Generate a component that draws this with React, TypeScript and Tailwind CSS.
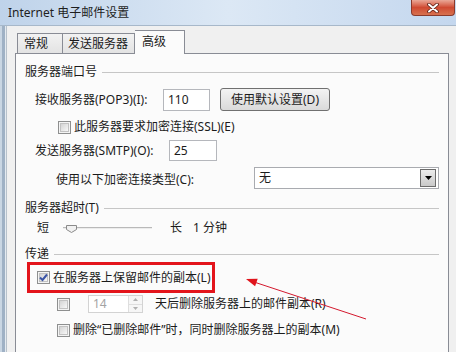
import React from "react";

function Checkbox({ checked }: { checked?: boolean }) {
  return (
    <span className="relative flex h-[13px] w-[13px] shrink-0 items-center justify-center border border-[#8e8f8f] bg-[#f4f4f4]">
      <span className="h-[9px] w-[9px] border border-[#c2c2c2] bg-gradient-to-br from-[#d4d4d4] to-[#f8f8f8]" />
      {checked && (
        <svg className="absolute left-0 top-0" width="11" height="11" viewBox="0 0 11 11">
          <path d="M2 5.5 L4.5 8 L9 2.5" fill="none" stroke="#3b55a6" strokeWidth="2" />
        </svg>
      )}
    </span>
  );
}

function GroupHeader({ label, className }: { label: string; className?: string }) {
  return (
    <div className={`flex h-[16px] items-center ${className ?? ""}`}>
      <span className="leading-[16px]">{label}</span>
      <span className="ml-[5px] h-px flex-1 bg-[#c6c6c6]" />
    </div>
  );
}

function CloseButton() {
  return (
    <div className="flex h-[16px] w-[44px] items-center justify-center rounded-b-[4px] border border-t-0 border-[#8a3a2c] bg-gradient-to-b from-[#e9a797] via-[#cf4a32] to-[#d7714f]">
      <svg width="12" height="10" viewBox="0 0 12 10">
        <path d="M2 1.5 L10 8.5 M10 1.5 L2 8.5" stroke="#5b1d12" strokeWidth="3.6" strokeLinecap="round" />
        <path d="M2 1.5 L10 8.5 M10 1.5 L2 8.5" stroke="#ffffff" strokeWidth="2" strokeLinecap="round" />
      </svg>
    </div>
  );
}

export default function App() {
  return (
    <div className="relative h-[352px] w-[456px] overflow-hidden bg-[#f0f0f0] text-[12px] text-[#1b1b1b] font-['Noto_Sans','Noto_Sans_CJK_SC',sans-serif]">
      {/* title bar */}
      <div className="flex h-[26px] items-start border-b border-[#a7b8ca] bg-gradient-to-r from-[#bfd3ea] via-[#dce8f5] to-[#c4d7ee]">
        <span className="ml-[8px] mt-[5px] leading-[16px] text-[#1e1e1e]">Internet 电子邮件设置</span>
        <div className="ml-auto mr-px">
          <CloseButton />
        </div>
      </div>

      <div className="flex h-[326px]">
        {/* left window frame */}
        <div className="flex w-[7px] shrink-0">
          <span className="w-[2px] bg-[#c9d6e3]" />
          <span className="w-[3px] bg-[#9fb1c5]" />
          <span className="w-px bg-[#e4eaf0]" />
          <span className="w-px bg-[#b7c1cb]" />
        </div>

        <div className="flex-1 pl-[8px] pt-[5px]">
          {/* tabs */}
          <div className="ml-[2px] flex h-[22px] items-end">
            <div className="flex h-[20px] w-[46px] items-center border border-b-0 border-[#898c95] bg-gradient-to-b from-[#f2f2f2] to-[#e3e3e3] pl-[6px] leading-[16px]">
              常规
            </div>
            <div className="flex h-[20px] w-[72px] items-center border border-b-0 border-l-0 border-[#898c95] bg-gradient-to-b from-[#f2f2f2] to-[#e3e3e3] pl-[5px] leading-[16px]">
              发送服务器
            </div>
            <div className="relative z-10 -mb-px flex h-[24px] w-[50px] items-start border border-b-0 border-l-0 border-[#898c95] bg-[#fbfbfb] pl-[7px] pt-[3px] leading-[16px]">
              高级
            </div>
          </div>

          {/* panel */}
          <div className="h-[320px] w-[434px] border border-[#898c95] bg-[#fbfbfb] pl-[9px] pr-[9px] pt-[10px]">
            <GroupHeader label="服务器端口号" />

            <div className="mt-[8px] flex h-[23px] items-center">
              <span className="w-[138px] pl-[10px] leading-[16px]">接收服务器(POP3)(I):</span>
              <div className="flex h-[22px] w-[47px] items-center border border-[#b5b7bc] bg-white pl-[4px] leading-[16px]">110</div>
              <button className="ml-[10px] flex h-[23px] w-[110px] items-center justify-center rounded-[3px] border border-[#707070] bg-gradient-to-b from-[#f3f3f3] to-[#dadada] leading-[16px]">
                使用默认设置(D)
              </button>
            </div>

            <div className="mt-[9px] flex h-[14px] items-center pl-[33px]">
              <Checkbox />
              <span className="ml-[3px] leading-[16px]">此服务器要求加密连接(SSL)(E)</span>
            </div>

            <div className="mt-[6px] flex h-[21px] items-center">
              <span className="w-[144px] pl-[10px] leading-[16px]">发送服务器(SMTP)(O):</span>
              <div className="flex h-[21px] w-[48px] items-center border border-[#b5b7bc] bg-white pl-[4px] leading-[16px]">25</div>
            </div>

            <div className="mt-[6px] flex h-[22px] items-center">
              <span className="mt-[4px] pl-[31px] leading-[16px]">使用以下加密连接类型(C):</span>
              <div className="ml-auto flex h-[22px] w-[185px] items-center border border-[#a9abb0] bg-white pl-[4px] pr-[2px]">
                <span className="flex-1 leading-[16px]">无</span>
                <span className="flex h-[18px] w-[16px] items-center justify-center border border-[#6c6c6c] bg-gradient-to-b from-[#ececec] to-[#c9c9c9]">
                  <svg width="7" height="4" viewBox="0 0 7 4">
                    <path d="M0 0 H7 L3.5 4 Z" fill="#000" />
                  </svg>
                </span>
              </div>
            </div>

            <GroupHeader label="服务器超时(T)" className="mt-[11px]" />

            <div className="mt-[5px] flex h-[14px] items-center pl-[12px]">
              <span className="leading-[16px]">短</span>
              <svg className="ml-[14px]" width="89" height="14" viewBox="0 0 89 14">
                <line x1="0" y1="6.5" x2="89" y2="6.5" stroke="#b9b9b9" />
                <line x1="0" y1="7.5" x2="89" y2="7.5" stroke="#ececec" />
                <path d="M3.5 4.5 H13.5 V8.5 L8.5 11.5 L3.5 8.5 Z" fill="#f1f1f1" stroke="#8a8a8a" />
              </svg>
              <span className="ml-[18px] leading-[16px]">长</span>
              <span className="ml-[11px] leading-[16px]">1 分钟</span>
            </div>

            <GroupHeader label="传递" className="mt-[11px]" />

            <div className="ml-[2px] flex h-[31px] w-[188px] items-center border-[3px] border-[#e3141b] pl-[7px]">
              <Checkbox checked />
              <span className="ml-[3px] leading-[16px]">在服务器上保留邮件的副本(L)</span>
            </div>

            <div className="mt-[2px] flex h-[18px] items-center pl-[32px]">
              <Checkbox />
              <div className="ml-[18px] flex h-[18px] w-[55px] items-center border border-[#d3d3d3] bg-white">
                <span className="flex-1 pl-[4px] leading-[16px] text-[#a3a3a3]">14</span>
                <span className="flex h-full w-[14px] flex-col border-l border-[#dedede]">
                  <span className="flex flex-1 items-center justify-center border-b border-[#dedede] bg-[#f6f6f6]">
                    <svg width="5" height="3" viewBox="0 0 5 3">
                      <path d="M0 3 H5 L2.5 0 Z" fill="#b0b0b0" />
                    </svg>
                  </span>
                  <span className="flex flex-1 items-center justify-center bg-[#f6f6f6]">
                    <svg width="5" height="3" viewBox="0 0 5 3">
                      <path d="M0 0 H5 L2.5 3 Z" fill="#b0b0b0" />
                    </svg>
                  </span>
                </span>
              </div>
              <span className="ml-[12px] leading-[16px]">天后删除服务器上的邮件副本(R)</span>
            </div>

            <div className="mt-[10px] flex h-[14px] items-center pl-[32px]">
              <Checkbox />
              <span className="ml-[3px] leading-[16px]">删除“已删除邮件”时，同时删除服务器上的副本(M)</span>
            </div>
          </div>
        </div>
      </div>

      {/* red annotation arrow */}
      <svg className="pointer-events-none absolute left-0 top-0" width="456" height="352" viewBox="0 0 456 352">
        <line x1="366" y1="319" x2="254" y2="282" stroke="#d4192e" strokeWidth="1" />
        <path d="M246 279 L257.7 278.7 L255.1 286.3 Z" fill="#e0141c" />
      </svg>
    </div>
  );
}
